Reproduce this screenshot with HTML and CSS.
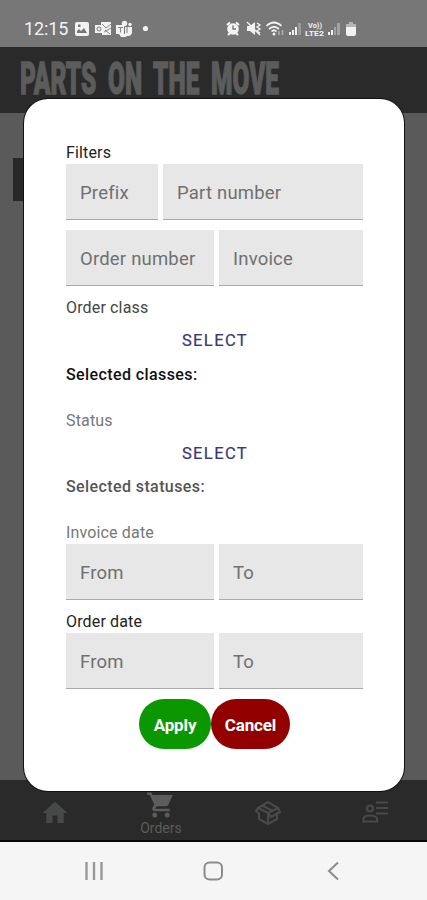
FILE: index.html
```
<!DOCTYPE html>
<html lang="en">
<head>
<meta charset="utf-8">
<title>Parts on the move</title>
<link rel="stylesheet" href="styles.css">
</head>
<body>
<div class="screen">
  <header class="status">
    <span class="clock">12:15</span>
    <svg class="status-icons" viewBox="0 0 352 46" width="352" height="46" fill="#f2f2f2">
      <path fill-rule="evenodd" d="M2 22h10q2 0 2 2v10q0 2-2 2H2q-2 0-2-2V24q0-2 2-2zm0 11h10l-3-5-3 3-2-2-2 2zM3 24.500v2.500h2.500v-2.500z"/>
      <path d="M26 22h10v13h-9v-3h-1z"/><path d="M20 25h8v8h-8z"/>
      <path d="M27 24l4 4 5-4M29 32l7-4M30 30l5 4" stroke="#888" stroke-width="1" fill="none"/>
      <circle cx="24" cy="29" r="2" fill="none" stroke="#777"/>
      <path d="M41 25h8v9h-8zM50 27h7v6q-1 3-4 3h-3zM44 34h9l-2 3h-5z"/><circle cx="49.500" cy="23.500" r="2.700"/><circle cx="55" cy="24.500" r="1.700"/>
      <path d="M43 27.500h5M45.500 27.500v5M52 27v6" stroke="#888" stroke-width="1.100"/>
      <circle cx="70.500" cy="28.500" r="2.600"/>
      <circle cx="158" cy="29" r="5.800"/><path d="M152 25l3-2.500M164 25l-3-2.500M153 35l2-2M163 35l-2-2" stroke="#f2f2f2" stroke-width="2.200"/><path d="M158 25.500v3.500h3" fill="none" stroke="#777" stroke-width="1.400"/>
      <path d="M172 26h3l5-4v13l-5-4h-3z"/><path d="M172 22l13 13M182 23l3 2-3 2 3 2-3 2 3 2" stroke="#f2f2f2" stroke-width="1.400" fill="none"/>
      <g fill="none" stroke="#f2f2f2" stroke-width="1.700"><path d="M191.500 26q7.500-7 15 0M194 29q5-4.500 10 0M196.500 31.500q2.500-2.500 5 0"/></g><circle cx="199" cy="34" r="1.500"/><path d="M204 35v-4M207.500 35v-5" stroke="#aaa" stroke-width="1.700"/>
      <path d="M214 32h2v3h-2zM217 30h2v5h-2zM220 27h2v8h-2z"/><path d="M223 23h3v12h-3z" fill="#999"/>
      <path d="M253 32h2v3h-2zM256 30h2v5h-2z"/><path d="M259 27h2v8h-2zM262 23h3v12h-3z" fill="#a2a2a2"/>
      <path d="M274 22h4v2h3v4h-10v-4h3z" fill="#b5b5b5"/><path d="M271 27h10v7q0 2-2 2h-6q-2 0-2-2z"/>
      <text class="volte" x="233" y="28" textLength="14" lengthAdjust="spacingAndGlyphs">Vo))</text>
      <text class="volte" x="230" y="36" textLength="19" lengthAdjust="spacingAndGlyphs">LTE2</text>
    </svg>
  </header>
  <div class="brand">
    <svg viewBox="0 0 427 66" width="427" height="66"><text class="wordmark" x="20" y="46.500" textLength="259" lengthAdjust="spacingAndGlyphs">PARTS ON THE MOVE</text></svg>
  </div>
  <main class="backdrop"><div class="tile"></div></main>
  <nav class="tabs">
    <div class="tab"><svg viewBox="0 0 24 24" width="30" height="30"><path d="M10 20v-6h4v6h5v-8h3L12 3 2 12h3v8z"/></svg></div>
    <div class="tab active"><svg viewBox="0 0 24 24" width="30" height="30"><path d="M7 18c-1.100 0-2 .9-2 2s.9 2 2 2 2-.9 2-2-.9-2-2-2zM1 2v2h2l3.600 7.600-1.400 2.400C4.500 15.400 5.500 17 7 17h12v-2H7.400l1.100-2h7.500c.7 0 1.400-.4 1.700-1L21.500 4H5.200l-.9-2zM17 18c-1.100 0-2 .9-2 2s.9 2 2 2 2-.9 2-2-.9-2-2-2z"/></svg><span>Orders</span></div>
    <div class="tab"><svg class="outline" viewBox="0 0 26 26" width="26" height="26"><path d="M3 8l10-6 10 6 2 4-3 1.500V19l-9 5-9-5v-5.500L1 11zM3 8l10 5 10-5M13 13v11M13 13l3 4 9-5M8 6l9 4.500"/></svg></div>
    <div class="tab people"><svg class="outline" viewBox="0 0 27 24" width="27" height="24"><circle cx="8" cy="8.500" r="3"/><path d="M1.500 21.500v-3q1-3 6.500-3t7 3v3zM14 2.500h12M14 8h12M14 13.500h12"/></svg></div>
  </nav>
  <footer class="system">
    <svg viewBox="0 0 427 57" width="427" height="57" fill="none" stroke="#8b8b8b" stroke-width="2"><path d="M86.500 20v18M94 20v18M101.500 20v18" stroke-width="2.400" stroke="#999"/><rect x="204.500" y="20.500" width="17.500" height="17" rx="5"/><path d="M338 20.500L329 29l9 8.500"/></svg>
  </footer>
</div>
<section class="modal" role="dialog">
  <div class="label">Filters</div>
  <div class="row prefix"><div class="field">Prefix</div><div class="field">Part number</div></div>
  <div class="row second"><div class="field">Order number</div><div class="field">Invoice</div></div>
  <div class="label gap soft">Order class</div>
  <div class="select">SELECT</div>
  <div class="label strong">Selected classes:</div>
  <div class="label wide muted">Status</div>
  <div class="select">SELECT</div>
  <div class="label strong gray">Selected statuses:</div>
  <div class="label wide muted">Invoice date</div>
  <div class="row"><div class="field">From</div><div class="field">To</div></div>
  <div class="label gap">Order date</div>
  <div class="row"><div class="field">From</div><div class="field">To</div></div>
  <div class="actions"><div class="btn apply">Apply</div><div class="btn cancel">Cancel</div></div>
</section>
</body>
</html>
```
FILE: styles.css
```
* { box-sizing: border-box; }
body { margin: 0; width: 427px; height: 900px; overflow: hidden; font-family: Roboto, sans-serif; }
svg { display: block; }
.screen { height: 900px; display: flex; flex-direction: column; }
.status { height: 47px; background: #777; display: flex; padding-left: 24px; color: #f2f2f2; }
.clock { width: 51px; padding-top: 5px; font-size: 18px; line-height: 48px; letter-spacing: -.1px; }
.volte { font-size: 7px; font-weight: 700; }
.brand { height: 66px; background: #2a2a2a; }
.wordmark { font-size: 44px; font-weight: 900; word-spacing: 10px; fill: #5c5c5c; stroke: #5c5c5c; stroke-width: 1.300px; }
.backdrop { height: 667px; background: #5a5a5a; padding: 45px 0 0 13px; }
.tile { width: 40px; height: 43px; background: #282828; }
.tabs { height: 62px; background: #2a2a2a; border-bottom: 2px solid #090909; display: grid; grid-template-columns: 110px 102px 112px 103px; }
.tab { display: flex; flex-direction: column; align-items: center; padding-top: 18px; color: #5c5c5c; font-size: 14px; line-height: 17px; }
.tab svg { fill: #474949; }
.tab svg.outline { fill: none; stroke: #494949; stroke-width: 2.200; margin-top: 2px; }
.tab.active { padding-top: 10px; }
.tab.active svg { fill: #5c5c5c; }
.system { height: 58px; background: #f5f5f5; }
.modal { position: absolute; left: 24px; top: 99px; width: 380px; height: 692px; padding: 43px 41px 0 42px; background: #fff; border-radius: 24px; box-shadow: 0 0 0 1px #111; }
.label { height: 22px; line-height: 22px; font-size: 16px; letter-spacing: .15px; color: #222; }
.gap { margin-top: 11px; }
.wide { margin-top: 24px; }
.soft { color: #444; }
.muted { color: #777; }
.strong { font-weight: 500; color: #111; letter-spacing: .4px; }
.strong.gray { color: #555; }
.select { height: 44.500px; line-height: 44px; padding-left: 1px; text-align: center; font-size: 16.500px; letter-spacing: 1.400px; color: #393878; -webkit-text-stroke: .2px #393878; }
.row { display: grid; grid-template-columns: 148px 144px; gap: 5px; }
.row.prefix { grid-template-columns: 92px 200px; }
.row.second { margin-top: 10px; }
.field { height: 56px; line-height: 58px; padding-left: 14px; font-size: 18.500px; letter-spacing: .2px; color: #707070; background: #e7e7e7; border-bottom: 1px solid #aaa; }
.actions { margin-top: 10px; display: flex; justify-content: center; }
.btn { height: 50px; line-height: 52px; width: 72px; border-radius: 25px; background: #0a9700; color: #fff; text-align: center; font-size: 17px; font-weight: 700; letter-spacing: -.15px; }
.btn.cancel { width: 79px; background: #920000; }
```
